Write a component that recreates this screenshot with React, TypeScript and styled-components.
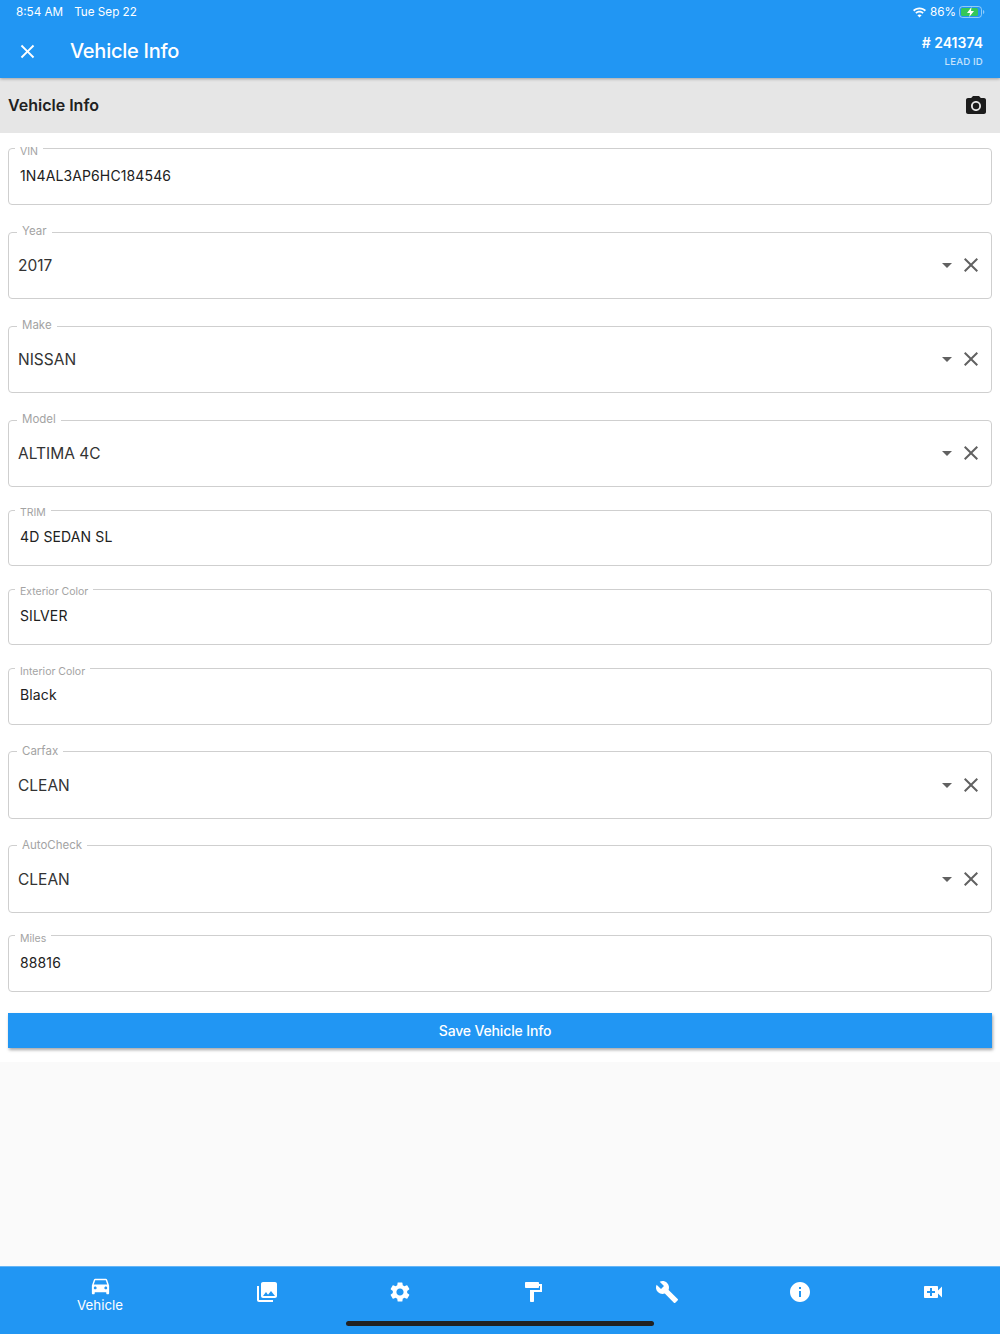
import React from "react";
import styled, { createGlobalStyle } from "styled-components";
import {
  MdArrowDropDown,
  MdBuild,
  MdCameraAlt,
  MdClose,
  MdDirectionsCar,
  MdFormatPaint,
  MdInfo,
  MdPhotoLibrary,
  MdSettings,
  MdVideoCall,
} from "react-icons/md";

const Global = createGlobalStyle`
  html, body { margin: 0; padding: 0; background: #fafafa; }
  * { box-sizing: border-box; }
  body { font-family: Inter, "Liberation Sans", sans-serif; }
`;

const Page = styled.div`
  width: 1000px;
  height: 1334px;
  display: flex;
  flex-direction: column;
  overflow: hidden;
`;

const Header = styled.header`
  height: 78px;
  flex: none;
  background: #2196f3;
  color: #fff;
  position: relative;
  z-index: 2;
  box-shadow: 0 1px 3px rgba(0, 0, 0, 0.3);
  display: flex;
  flex-direction: column;
`;

const StatusBar = styled.div`
  height: 24px;
  display: flex;
  align-items: center;
  justify-content: space-between;
  padding: 0 15px 0 16px;
  font-size: 11.7px;
`;

const StatusGroup = styled.div`
  display: flex;
  align-items: center;
  gap: 11px;
`;

const StatusRight = styled.div`
  display: flex;
  align-items: center;
  gap: 3px;
`;

const AppBar = styled.div`
  flex: 1;
  display: flex;
  align-items: flex-start;
  justify-content: space-between;
  padding: 0 17px 0 16px;
`;

const TitleGroup = styled.div`
  display: flex;
  align-items: center;
  gap: 31px;
  height: 54px;
`;

const AppTitle = styled.h1`
  margin: 0;
  font-size: 20px;
  font-weight: 500;
  line-height: 54px;
  letter-spacing: -0.25px;
`;

const LeadBlock = styled.div`
  display: flex;
  flex-direction: column;
  align-items: flex-end;
  padding-top: 10px;
`;

const LeadNumber = styled.div`
  font-size: 14px;
  font-weight: 600;
  line-height: 17px;
`;

const LeadLabel = styled.div`
  font-size: 9.6px;
  font-weight: 500;
  line-height: 12px;
  margin-top: 5px;
  opacity: 0.75;
  letter-spacing: 0.2px;
`;

const SectionBar = styled.div`
  height: 55px;
  flex: none;
  background: #e6e6e6;
  display: flex;
  align-items: center;
  justify-content: space-between;
  padding: 0 12px 2px 8px;
  color: #212121;
`;

const SectionTitle = styled.h2`
  margin: 0;
  font-size: 16px;
  font-weight: 600;
`;

const CameraIcon = styled(MdCameraAlt)`
  color: #1c1c1c;
  margin-top: 2px;
`;

const Form = styled.form`
  flex: none;
  height: 929px;
  background: #fff;
  padding: 9.75px 8px 0;
  display: flex;
  flex-direction: column;
`;

const Field = styled.fieldset<{ $kind: "text" | "select"; $first?: boolean }>`
  margin: ${(p) => (p.$first ? 0 : p.$kind === "select" ? "21.3px" : "17.3px")} 0 0;
  padding: 0;
  min-width: 0;
  height: ${(p) => (p.$kind === "select" ? 72.7 : 62)}px;
  flex: none;
  border: 1px solid #cfcfcf;
  border-radius: 4px;
`;

const Legend = styled.legend<{ $kind: "text" | "select" }>`
  margin-left: ${(p) => (p.$kind === "select" ? 8 : 6)}px;
  padding: 0 5px;
  height: 12px;
  font-size: ${(p) => (p.$kind === "select" ? 11.5 : 10.5)}px;
  line-height: 12px;
  color: #a3a3a3;
  transform: translateY(${(p) => (p.$kind === "select" ? -1 : 3)}px);
`;

const FieldBody = styled.div<{ $kind: "text" | "select" }>`
  width: 100%;
  display: flex;
  align-items: ${(p) => (p.$kind === "select" ? "center" : "flex-start")};
  padding: ${(p) => (p.$kind === "select" ? "15px 8px 0 9px" : "11.85px 11px 0")};
`;

const Value = styled.div<{ $kind: "text" | "select" }>`
  flex: 1;
  color: ${(p) => (p.$kind === "select" ? "#333" : "#212121")};
  font-size: ${(p) => (p.$kind === "select" ? 15.5 : 14)}px;
  letter-spacing: ${(p) => (p.$kind === "select" ? 0 : 0.12)}px;
  line-height: 17px;
  margin-top: ${(p) => (p.$kind === "select" ? 1 : 0)}px;
`;

const FieldIcons = styled.div`
  display: flex;
  align-items: center;
  color: #616161;
`;

const SaveButton = styled.button`
  margin-top: 21.2px;
  height: 35px;
  flex: none;
  border: none;
  border-radius: 0;
  background: #2196f3;
  color: #fff;
  font-family: inherit;
  font-size: 14px;
  font-weight: 500;
  letter-spacing: -0.15px;
  padding: 0 10px 1px 0;
  box-shadow: 1px 2px 3px rgba(0, 0, 0, 0.35);
`;

const Spacer = styled.div`
  flex: 1;
  background: #fafafa;
`;

const BottomNav = styled.nav`
  height: 68px;
  flex: none;
  background: #2196f3;
  border-top: 1px solid #64b5f6;
  display: grid;
  grid-template-columns: 200px repeat(6, 1fr);
  position: relative;
  color: #fff;
`;

const NavItem = styled.div`
  display: flex;
  flex-direction: column;
  align-items: center;
  height: 50px;
  justify-content: center;
`;

const NavLabel = styled.span`
  font-size: 13.3px;
  line-height: 15px;
  margin-top: 1px;
`;

const CarIcon = styled(MdDirectionsCar)`
  margin-top: 2px;
`;

const HomeIndicator = styled.div`
  position: absolute;
  left: 346px;
  bottom: 8px;
  width: 308px;
  height: 5px;
  border-radius: 3px;
  background: #212121;
`;

const Battery = () => (
  <svg width="26" height="12" viewBox="0 0 26 12" fill="none">
    <rect x="0.5" y="0.5" width="22" height="11" rx="3" stroke="#fff" strokeOpacity="0.5" />
    <rect x="2" y="2" width="17" height="8" rx="1.5" fill="#34c759" />
    <path d="M24 4v4c.8-.3 1.3-1.1 1.3-2S24.8 4.300 24 4z" fill="#fff" fillOpacity="0.5" />
    <path d="M12.500 1 8 7h3l-.8 4L15 5h-3z" fill="#fff" />
  </svg>
);

const Wifi = () => (
  <svg width="15" height="11" viewBox="0 0 15 11" fill="#fff">
    <path d="M7.500 2.300c2 0 3.800.8 5.200 2.100l1.300-1.300C12.300 1.400 10 .4 7.500.4S2.700 1.400 1 3.100l1.300 1.300c1.400-1.300 3.200-2.100 5.200-2.100z" />
    <path d="M7.500 5.500c1.100 0 2.200.4 3 1.200l1.200-1.300C10.600 4.300 9.100 3.700 7.500 3.700S4.400 4.300 3.300 5.400l1.200 1.300c.8-.8 1.900-1.200 3-1.200z" />
    <path d="M7.500 10.600 9.600 8.300C9 7.700 8.300 7.400 7.500 7.400S6 7.700 5.400 8.300z" />
  </svg>
);

type FieldDef = { label: string; value: string; kind: "text" | "select" };

const fields: FieldDef[] = [
  { label: "VIN", value: "1N4AL3AP6HC184546", kind: "text" },
  { label: "Year", value: "2017", kind: "select" },
  { label: "Make", value: "NISSAN", kind: "select" },
  { label: "Model", value: "ALTIMA 4C", kind: "select" },
  { label: "TRIM", value: "4D SEDAN SL", kind: "text" },
  { label: "Exterior Color", value: "SILVER", kind: "text" },
  { label: "Interior Color", value: "Black", kind: "text" },
  { label: "Carfax", value: "CLEAN", kind: "select" },
  { label: "AutoCheck", value: "CLEAN", kind: "select" },
  { label: "Miles", value: "88816", kind: "text" },
];

export default function App() {
  return (
    <Page>
      <Global />
      <Header>
        <StatusBar>
          <StatusGroup>
            <span>8:54 AM</span>
            <span>Tue Sep 22</span>
          </StatusGroup>
          <StatusRight>
            <Wifi />
            <span>86%</span>
            <Battery />
          </StatusRight>
        </StatusBar>
        <AppBar>
          <TitleGroup>
            <MdClose size={23} />
            <AppTitle>Vehicle Info</AppTitle>
          </TitleGroup>
          <LeadBlock>
            <LeadNumber># 241374</LeadNumber>
            <LeadLabel>LEAD ID</LeadLabel>
          </LeadBlock>
        </AppBar>
      </Header>
      <SectionBar>
        <SectionTitle>Vehicle Info</SectionTitle>
        <CameraIcon size={24} />
      </SectionBar>
      <Form>
        {fields.map((f, i) => (
          <Field key={f.label} $kind={f.kind} $first={i === 0}>
            <Legend $kind={f.kind}>{f.label}</Legend>
            <FieldBody $kind={f.kind}>
              <Value $kind={f.kind}>{f.value}</Value>
              {f.kind === "select" && (
                <FieldIcons>
                  <MdArrowDropDown size={24} />
                  <MdClose size={24} />
                </FieldIcons>
              )}
            </FieldBody>
          </Field>
        ))}
        <SaveButton type="button">Save Vehicle Info</SaveButton>
      </Form>
      <Spacer />
      <BottomNav>
        <NavItem>
          <CarIcon size={23} />
          <NavLabel>Vehicle</NavLabel>
        </NavItem>
        <NavItem><MdPhotoLibrary size={24} /></NavItem>
        <NavItem><MdSettings size={24} /></NavItem>
        <NavItem><MdFormatPaint size={24} /></NavItem>
        <NavItem><MdBuild size={24} /></NavItem>
        <NavItem><MdInfo size={24} /></NavItem>
        <NavItem><MdVideoCall size={24} /></NavItem>
        <HomeIndicator />
      </BottomNav>
    </Page>
  );
}
